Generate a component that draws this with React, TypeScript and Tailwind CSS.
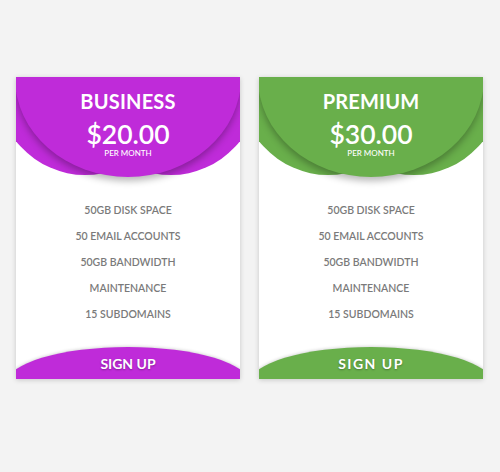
import React from "react";

type Plan = { name: string; price: string; color: string; spaced?: boolean };

const features = [
  "50GB DISK SPACE",
  "50 EMAIL ACCOUNTS",
  "50GB BANDWIDTH",
  "MAINTENANCE",
  "15 SUBDOMAINS",
];

function Card({ plan }: { plan: Plan }) {
  return (
    <div className="relative flex h-[302px] w-[224px] flex-col overflow-hidden bg-white shadow-[0_1px_5px_rgba(0,0,0,0.18)]">
      <div className="relative h-[100px]">
        <div
          className="absolute left-[-22px] top-[-96px] h-[194px] w-[182px] rounded-[50%]"
          style={{ backgroundColor: plan.color }}
        />
        <div
          className="absolute left-[64px] top-[-96px] h-[194px] w-[182px] rounded-[50%]"
          style={{ backgroundColor: plan.color }}
        />
        <div
          className="absolute left-[-1px] top-[-98px] h-[198px] w-[226px] rounded-[50%] shadow-[0_4px_7px_rgba(0,0,0,0.28)]"
          style={{ backgroundColor: plan.color }}
        />
        <div className="relative flex flex-col items-center pt-[13px] text-white">
          <div className="text-[20px] font-bold leading-[22px] tracking-[0.2px]">{plan.name}</div>
          <div className="mt-[9px] text-[26.5px] font-semibold leading-[26px]">{plan.price}</div>
          <div className="mt-[2px] text-[8px] font-medium leading-[8px]">PER MONTH</div>
        </div>
      </div>
      <div className="mt-[26px] flex flex-col items-center gap-[12px] text-[10.5px] font-semibold text-[#7a7a7a]">
        {features.map((f) => (
          <div key={f} className="leading-[14px]">
            {f}
          </div>
        ))}
      </div>
      <div className="relative mt-auto h-[32px]">
        <div
          className="absolute left-[-10px] top-0 h-[74px] w-[244px] rounded-[50%] shadow-[0_-1px_3px_rgba(0,0,0,0.15)]"
          style={{ backgroundColor: plan.color }}
        />
        <div
          className={
            "relative flex h-full items-center justify-center text-[14px] font-bold text-white [text-shadow:0_1px_2px_rgba(0,0,0,0.3)] " +
            (plan.spaced ? "tracking-[1.5px]" : "tracking-[0px]")
          }
        >
          SIGN UP
        </div>
      </div>
    </div>
  );
}

export default function App() {
  const plans: Plan[] = [
    { name: "BUSINESS", price: "$20.00", color: "#bf2bd9" },
    { name: "PREMIUM", price: "$30.00", color: "#69af4b", spaced: true },
  ];
  return (
    <div
      className="flex h-[472px] w-[500px] gap-[19px] bg-[#f3f3f3] pl-[16px] pt-[77px]"
      style={{ fontFamily: "Lato, 'Open Sans', sans-serif" }}
    >
      {plans.map((p) => (
        <Card key={p.name} plan={p} />
      ))}
    </div>
  );
}
